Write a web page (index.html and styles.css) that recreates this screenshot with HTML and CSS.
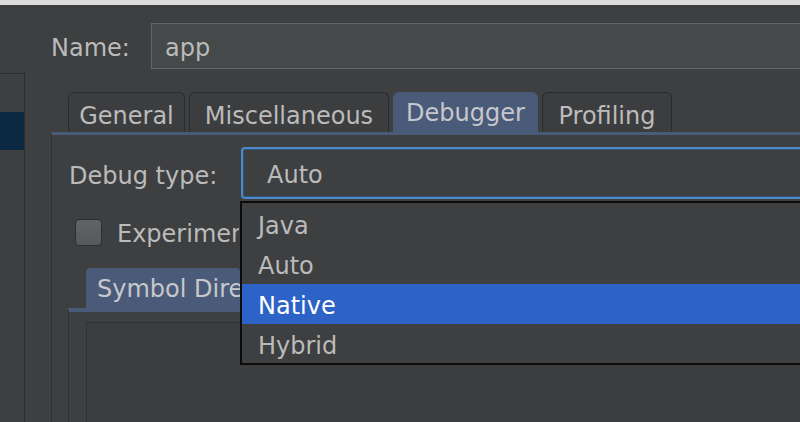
FILE: index.html
```html
<!DOCTYPE html>
<html>
<head>
<meta charset="utf-8">
<link rel="stylesheet" href="styles.css">
</head>
<body>
<div class="window">
  <div class="topstrip"></div>
  <div class="main">
    <div class="sidebar"><div class="sel"></div></div>
    <div class="content">
      <div class="name-row">
        <span class="label name-label">Name:</span>
        <div class="textfield">app</div>
      </div>
      <div class="tabs">
        <div class="tab tab-general">General</div>
        <div class="tab tab-misc">Miscellaneous</div>
        <div class="tab tab-debug active">Debugger</div>
        <div class="tab tab-prof">Profiling</div>
      </div>
      <div class="panel">
        <div class="debug-row">
          <span class="label debug-label">Debug type:</span>
          <div class="combo">Auto</div>
        </div>
        <div class="check-row">
          <span class="checkbox"></span>
          <span class="label check-label">Experimental features</span>
        </div>
        <div class="subtabs">
          <div class="subtab">Symbol Directories</div>
        </div>
        <div class="subpanel">
          <div class="listbox"></div>
        </div>
      </div>
    </div>
  </div>
  <div class="popup">
    <div class="item">Java</div>
    <div class="item">Auto</div>
    <div class="item selected">Native</div>
    <div class="item">Hybrid</div>
  </div>
</div>
</body>
</html>
```

FILE: styles.css
```css
html, body {
  margin: 0;
  padding: 0;
  background: #3d3f41;
}
.window {
  position: relative;
  width: 800px;
  height: 422px;
  overflow: hidden;
  background: #3d3f41;
  font-family: "DejaVu Sans", sans-serif;
  font-size: 24px;
  color: #bbbbbb;
}
.topstrip {
  height: 5px;
  background: #dcdcdc;
}
.main {
  display: flex;
  height: 417px;
}
.sidebar {
  width: 24px;
  flex: none;
  margin-top: 68px;
  border-top: 1px solid #2b2c2d;
  border-right: 1px solid #2b2c2d;
}
.sel {
  margin-top: 38px;
  height: 38px;
  background: #0c2943;
}
.content {
  flex: 1;
  padding-left: 26px;
  padding-top: 18px;
  min-width: 0;
}
.label {
  white-space: nowrap;
  color: #bbbbbb;
}
.name-row {
  display: flex;
  align-items: center;
  height: 46px;
}
.name-label {
  width: 100px;
  flex: none;
  padding-top: 4px;
}
.textfield {
  flex: none;
  width: 680px;
  box-sizing: border-box;
  height: 46px;
  border: 1px solid #626465;
  background: #45494a;
  padding-left: 13px;
  line-height: 48px;
}
.tabs {
  display: flex;
  gap: 4px;
  margin-top: 23px;
  padding-left: 17px;
  height: 40px;
}
.tab {
  box-sizing: border-box;
  height: 40px;
  border: 1px solid #2a2b2c;
  border-bottom: none;
  border-radius: 6px 6px 0 0;
  background: #3b3d3f;
  text-align: center;
  line-height: 46px;
  white-space: nowrap;
}
.tab-general { width: 117px; }
.tab-misc { width: 200px; }
.tab-debug { width: 145px; }
.tab-prof { width: 130px; }
.tab.active {
  background: #4a5a79;
  border-color: #4a5a79;
  color: #c6c8cc;
  line-height: 40px;
}
.panel {
  border-top: 3px solid #4a5a79;
  border-left: 1px solid #2e3032;
  height: 300px;
}
.debug-row {
  display: flex;
  align-items: center;
  margin-top: 12px;
  padding-left: 17px;
}
.debug-label {
  width: 172px;
  flex: none;
  padding-top: 5px;
}
.combo {
  flex: none;
  width: 600px;
  height: 52px;
  box-sizing: border-box;
  border: 2px solid #4b89c8;
  border-radius: 4px;
  box-shadow: inset 0 0 0 1px #2f5479;
  background: #3d3f41;
  padding-left: 24px;
  line-height: 52px;
}
.check-row {
  display: flex;
  align-items: center;
  gap: 15px;
  margin-top: 19px;
  padding-left: 23px;
  height: 28px;
}
.checkbox {
  width: 27px;
  height: 27px;
  box-sizing: border-box;
  border: 1px solid #2c2d2e;
  border-radius: 4px;
  background: linear-gradient(#626365, #57585a);
  flex: none;
}
.check-label {
  width: 122px;
  overflow: hidden;
  padding-top: 4px;
}
.subtabs {
  display: flex;
  margin-top: 22px;
  padding-left: 34px;
  height: 40px;
}
.subtab {
  width: 129px;
  height: 44px;
  overflow: hidden;
  background: #4a5a79;
  color: #c6c8cc;
  padding: 0 14px 0 11px;
  line-height: 42px;
  border-radius: 4px 4px 0 0;
  white-space: nowrap;
}
.subpanel {
  margin-left: 16px;
  border-top: 4px solid #4a5a79;
  border-left: 1px solid #2e3032;
  height: 200px;
  padding-left: 17px;
  padding-top: 10px;
}
.listbox {
  height: 200px;
  border-top: 1px solid #2f3133;
  border-left: 1px solid #2f3133;
  background: #3b3d3f;
}
.popup {
  position: absolute;
  left: 240px;
  top: 201px;
  width: 580px;
  height: 164px;
  box-sizing: border-box;
  border: 2px solid #0b0b0b;
  border-right: none;
  background: #3e3f41;
  padding-top: 1px;
}
.item {
  height: 40px;
  box-sizing: border-box;
  padding-top: 4px;
  line-height: 36px;
  padding-left: 16px;
  color: #bbbbbb;
}
.item.selected {
  background: #2d62c6;
  color: #ffffff;
}
```
